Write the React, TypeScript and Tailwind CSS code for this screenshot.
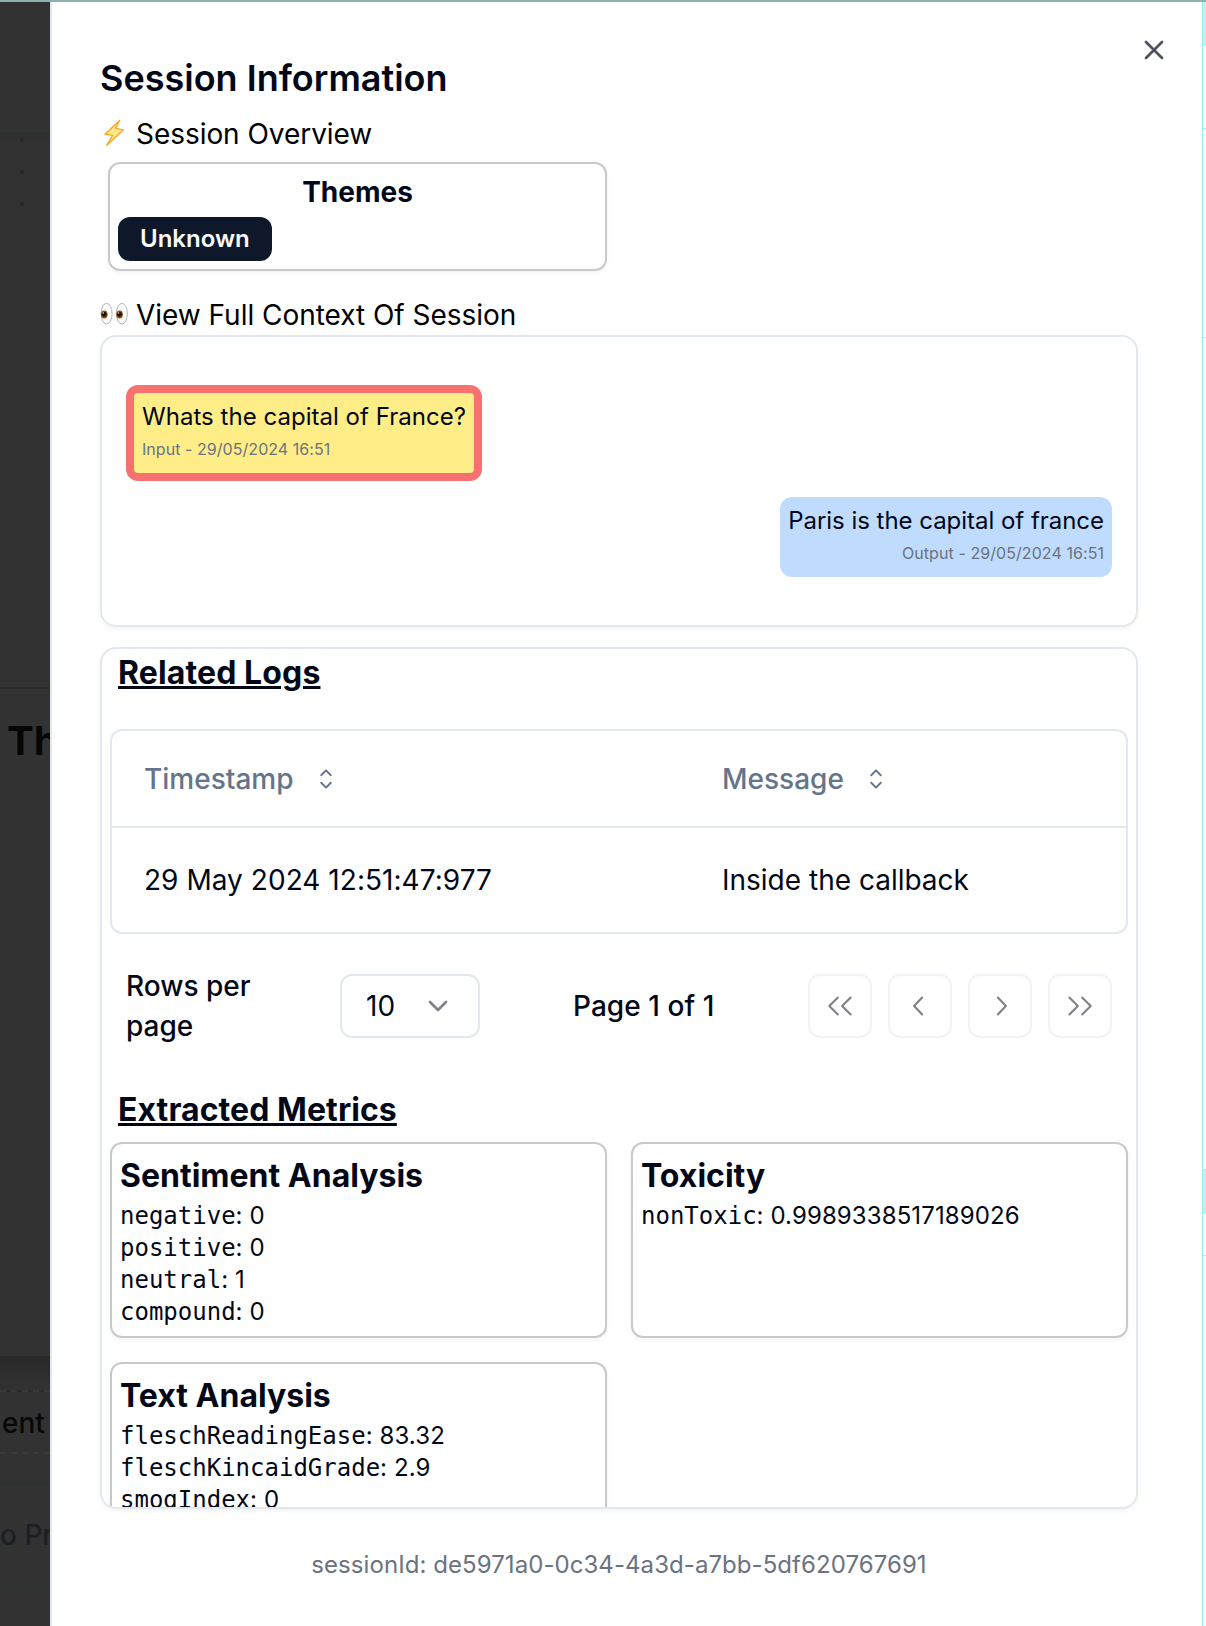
import React from "react";
import { ChevronDown, X } from "lucide-react";
import {
  RxCaretSort,
  RxChevronLeft,
  RxChevronRight,
  RxDoubleArrowLeft,
  RxDoubleArrowRight,
} from "react-icons/rx";

const sentiment: [string, string][] = [
  ["negative", "0"],
  ["positive", "0"],
  ["neutral", "1"],
  ["compound", "0"],
];

const textAnalysis: [string, string][] = [
  ["fleschReadingEase", "83.32"],
  ["fleschKincaidGrade", "2.9"],
  ["smogIndex", "0"],
];

function BoltIcon() {
  return (
    <svg viewBox="0 0 28 34" className="h-[34px] w-7 shrink-0" aria-hidden="true">
      <path
        d="M19.800 3.200 4.900 17.200l7.800 1.200L6.500 28.600 23.500 12.800l-8-1.400z"
        fill="#ffe88a"
        stroke="#f7a828"
        strokeWidth="1.3"
        strokeLinejoin="round"
      />
    </svg>
  );
}

function EyesIcon() {
  return (
    <svg viewBox="0 0 28 28" className="h-7 w-7 shrink-0" aria-hidden="true">
      {[6.6, 21.9].map((cx) => (
        <g key={cx}>
          <ellipse cx={cx} cy="12.700" rx="5.500" ry="10.300" fill="#fdfdfd" stroke="#b4b4b4" strokeWidth="1" />
          <ellipse cx={cx - 2.3} cy="13.500" rx="3.300" ry="4" fill="#8a5212" />
          <circle cx={cx - 2.5} cy="13.300" r="2.400" fill="#1c0d04" />
          <circle cx={cx - 3.3} cy="12" r="0.7" fill="#fff" />
        </g>
      ))}
    </svg>
  );
}

function MetricCard({ title, rows }: { title: string; rows: [string, string][] }) {
  return (
    <div className="rounded-xl border-2 border-[#c9c9c9] px-2 pt-3 pb-2 shadow-[0_2px_4px_rgba(0,0,0,0.05)]">
      <h3 className="mb-1 text-[32px] leading-10 font-bold">{title}</h3>
      {rows.map(([name, value]) => (
        <p key={name} className="text-2xl leading-8">
          <span className="font-['DejaVu_Sans_Mono',monospace]">{name}</span>
          <span className="tracking-[0.1px]">: {value}</span>
        </p>
      ))}
    </div>
  );
}

function PagerButton({ children }: { children: React.ReactNode }) {
  return (
    <button className="flex size-16 items-center justify-center rounded-xl border-2 border-[#e2e8f0] opacity-50">
      {children}
    </button>
  );
}

export default function App() {
  return (
    <div className="flex h-[1626px] w-[1206px] flex-col overflow-hidden bg-white font-['Inter',sans-serif] text-[#020817]">
      <div className="h-0.5 shrink-0 bg-[#8fb0b3]" />
      <div className="flex min-h-0 flex-1">
        <aside className="flex w-[50px] shrink-0 flex-col overflow-hidden bg-[#323232] whitespace-nowrap">
          <div className="h-[130px] border-b-2 border-[#2e3636]" />
          <div className="flex h-[557px] flex-col gap-7 border-b-2 border-[#2b2b2b] bg-linear-to-b from-[#2f2f2f] to-[#323232] to-3% pt-1.5 pl-5">
            <i className="size-1 rounded-full bg-[#272727]" />
            <i className="size-1 rounded-full bg-[#272727]" />
            <i className="size-1 rounded-full bg-[#272727]" />
          </div>
          <div className="h-[667px] pt-[27px] pl-[7px] text-[40px] leading-[50px] font-bold text-[#050505]">Th</div>
          <div className="h-9 border-b-2 border-dashed border-[#393939] bg-linear-to-b from-[#292929] to-[#323232]" />
          <div className="h-[62px] border-b-2 border-dashed border-[#393939] pt-[11px] pl-0.5 text-[28px] leading-10 font-medium text-[#080808]">ent</div>
          <div className="h-[34px] border-b-2 border-[#2e3636]" />
          <div className="h-[97px] border-b-2 border-[#2e3636] pt-[27px] text-[28px] leading-10 font-medium text-[#1c1f25]">o Pr</div>
        </aside>

        <main className="flex w-[1152px] shrink-0 flex-col border-l-2 border-[#e2e8f0] pl-12">
          <header className="flex justify-between pt-8 pr-8">
            <h1 className="mt-6 text-4xl leading-[40px] font-semibold">Session Information</h1>
            <X className="size-8 text-[#4e525d]" strokeWidth={2} />
          </header>

          <h2 className="mt-3 flex h-12 items-center gap-2 text-[28px] tracking-[-0.05px] text-black">
            <BoltIcon />
            Session Overview
          </h2>
          <div className="mt-1 ml-2 flex h-[109px] w-[499px] shrink-0 flex-col items-start rounded-xl border-2 border-[#c9c9c9] px-2 pt-2 shadow-[0_2px_4px_rgba(0,0,0,0.05)]">
            <h3 className="w-full text-center text-[28px] leading-10 font-bold">Themes</h3>
            <span className="mt-[5px] flex h-11 items-center rounded-xl bg-[#0f172a] px-[22px] text-2xl font-semibold text-[#f8fafc]">
              Unknown
            </span>
          </div>

          <h2 className="mt-6 flex h-10 items-center gap-2 text-[28px] tracking-[-0.03px] text-black">
            <EyesIcon />
            View Full Context Of Session
          </h2>
          <section className="flex h-[292px] w-[1038px] shrink-0 flex-col gap-4 rounded-2xl border-2 border-[#e2e8f0] px-6 pt-12 shadow-[0_2px_4px_rgba(0,0,0,0.05)]">
            <div className="self-start rounded-xl border-8 border-[#f87171] bg-[#ffed87] p-2">
              <p className="text-2xl leading-8 tracking-[0.03px]">Whats the capital of France?</p>
              <p className="text-base leading-8 tracking-[0.05px] text-[#6b7280]">Input - 29/05/2024 16:51</p>
            </div>
            <div className="self-end rounded-xl bg-[#bfdbfe] p-2 text-right">
              <p className="text-2xl leading-8 tracking-[-0.03px]">Paris is the capital of france</p>
              <p className="text-base leading-8 tracking-[0.07px] text-[#6b7280]">Output - 29/05/2024 16:51</p>
            </div>
          </section>

          <section className="mt-5 flex h-[862px] w-[1038px] shrink-0 flex-col overflow-hidden rounded-2xl border-2 border-[#e2e8f0] px-2 shadow-[0_2px_4px_rgba(0,0,0,0.05)]">
            <h2 className="ml-2 text-[32px] leading-[48px] font-bold tracking-[0.12px] underline">Related Logs</h2>
            <div className="mt-8 h-[205px] shrink-0 rounded-xl border-2 border-[#e2e8f0] text-[28px]">
              <div className="grid h-[97px] grid-cols-[578px_1fr] items-center border-b-2 border-[#e2e8f0] pl-8 font-medium text-[#64748b]">
                <div className="flex items-center gap-[17px]">
                  Timestamp
                  <RxCaretSort className="size-8" />
                </div>
                <div className="flex items-center gap-4">
                  Message
                  <RxCaretSort className="size-8" />
                </div>
              </div>
              <div className="grid h-[104px] grid-cols-[578px_1fr] items-center pl-8">
                <div className="tracking-[0.04px]">29 May 2024 12:51:47:977</div>
                <div>Inside the callback</div>
              </div>
            </div>

            <div className="mt-8 flex h-20 shrink-0 items-center px-4 text-[28px] leading-10 font-medium">
              <p className="w-[214px]">
                Rows per
                <br />
                page
              </p>
              <div className="flex h-16 w-[140px] items-center justify-between rounded-xl border-2 border-[#e2e8f0] px-6 font-normal">
                10
                <ChevronDown className="size-8 opacity-50" />
              </div>
              <p className="flex-1 pl-[93px] tracking-[0.06px]">Page 1 of 1</p>
              <div className="flex gap-4">
                <PagerButton><RxDoubleArrowLeft className="size-8" /></PagerButton>
                <PagerButton><RxChevronLeft className="size-8" /></PagerButton>
                <PagerButton><RxChevronRight className="size-8" /></PagerButton>
                <PagerButton><RxDoubleArrowRight className="size-8" /></PagerButton>
              </div>
            </div>

            <h2 className="mt-10 ml-2 text-[32px] leading-[48px] font-bold tracking-[0.07px] underline">Extracted Metrics</h2>
            <div className="mt-2 grid grid-cols-2 gap-6">
              <MetricCard title="Sentiment Analysis" rows={sentiment} />
              <MetricCard title="Toxicity" rows={[["nonToxic", "0.9989338517189026"]]} />
              <MetricCard title="Text Analysis" rows={textAnalysis} />
            </div>
          </section>

          <p className="mt-10 w-[1038px] text-center text-2xl leading-8 tracking-[0.065px] text-[#6b7280]">
            sessionId: de5971a0-0c34-4a3d-a7bb-5df620767691
          </p>
        </main>

        <div className="flex flex-1 flex-col border-l border-[#8ff0f4]">
          <div className="h-[43px] border-b border-[#8ff0f4] bg-[#d5e8e8]" />
          <div className="h-[84px] border-b border-[#8ff0f4] bg-[#f7fdfd]" />
          <div className="h-[209px] border-b border-[#8ff0f4]" />
          <div className="h-[832px] border-b border-[#8ff0f4]" />
          <div className="h-[43px] border-b border-[#8ff0f4] bg-[#d5e8e8]" />
          <div className="h-[43px] border-b border-[#8ff0f4]" />
        </div>
      </div>
    </div>
  );
}
